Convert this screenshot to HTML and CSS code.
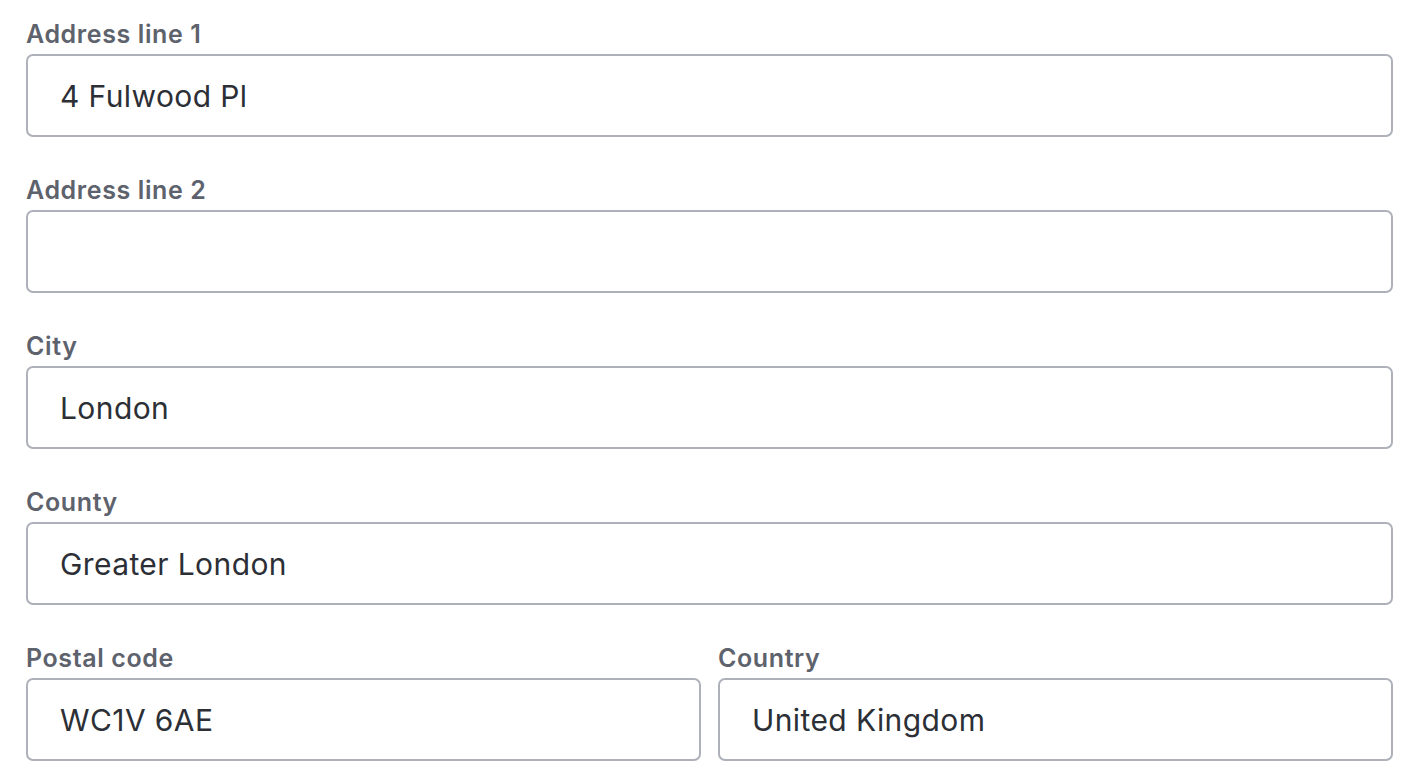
FILE: index.html
```html
<!DOCTYPE html>
<html lang="en">
<head>
<meta charset="utf-8">
<title>Address</title>
<link rel="stylesheet" href="styles.css">
</head>
<body>
<form class="address-form">
  <div class="field">
    <label class="field-label">Address line 1</label>
    <div class="field-input">4 Fulwood Pl</div>
  </div>
  <div class="field">
    <label class="field-label">Address line 2</label>
    <div class="field-input"></div>
  </div>
  <div class="field">
    <label class="field-label">City</label>
    <div class="field-input">London</div>
  </div>
  <div class="field">
    <label class="field-label">County</label>
    <div class="field-input">Greater London</div>
  </div>
  <div class="field-row">
    <div class="field">
      <label class="field-label">Postal code</label>
      <div class="field-input">WC1V 6AE</div>
    </div>
    <div class="field">
      <label class="field-label">Country</label>
      <div class="field-input">United Kingdom</div>
    </div>
  </div>
</form>
</body>
</html>
```

FILE: styles.css
```css
html, body {
  margin: 0;
  background: #ffffff;
}

body {
  padding: 19px 19px 0 26px;
  font-family: "Inter", "Liberation Sans", sans-serif;
}

.address-form {
  display: flex;
  flex-direction: column;
  gap: 38px;
}

.field {
  display: flex;
  flex-direction: column;
  gap: 5px;
}

.field-label {
  display: block;
  height: 30px;
  line-height: 30px;
  font-size: 25px;
  font-weight: 600;
  letter-spacing: 0.6px;
  color: #5d626c;
}

.field-input {
  box-sizing: border-box;
  height: 83px;
  border: 2px solid #aeb1ba;
  border-radius: 7px;
  padding: 0 31px 0 32px;
  display: flex;
  align-items: center;
  font-size: 30px;
  letter-spacing: 0.4px;
  color: #2c2f36;
}

.field-row {
  display: grid;
  grid-template-columns: 1fr 1fr;
  column-gap: 17px;
}
```
